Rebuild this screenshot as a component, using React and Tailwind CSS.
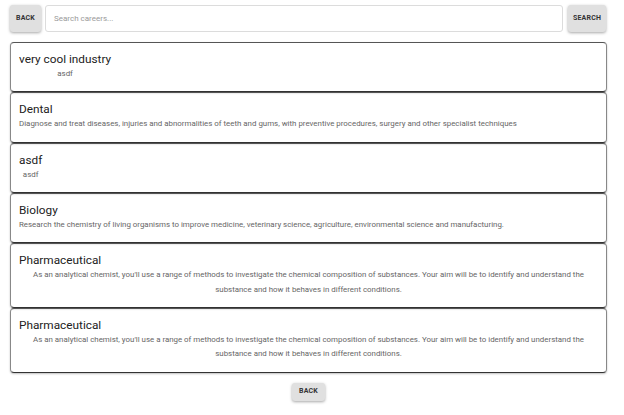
import React from "react";

const items = [
  { t: "very cool industry", d: "asdf" },
  { t: "Dental", d: "Diagnose and treat diseases, injuries and abnormalities of teeth and gums, with preventive procedures, surgery and other specialist techniques" },
  { t: "asdf", d: "asdf" },
  { t: "Biology", d: "Research the chemistry of living organisms to improve medicine, veterinary science, agriculture, environmental science and manufacturing." },
  { t: "Pharmaceutical", d: "As an analytical chemist, you'll use a range of methods to investigate the chemical composition of substances. Your aim will be to identify and understand the substance and how it behaves in different conditions." },
  { t: "Pharmaceutical", d: "As an analytical chemist, you'll use a range of methods to investigate the chemical composition of substances. Your aim will be to identify and understand the substance and how it behaves in different conditions." },
];

function Btn({ children, cls }) {
  return (
    <button className={"bg-[#e0e0e0] rounded-[3px] shadow-[0_1px_3px_rgba(0,0,0,0.35)] text-[7px] font-bold text-[#333] tracking-[0.2px] flex items-center justify-center " + cls}>
      {children}
    </button>
  );
}

export default function App() {
  return (
    <div className="w-[624px] h-[415px] bg-white font-['Roboto',sans-serif] pl-[10px] pt-[5px]">
      <div className="w-[596px] flex items-center gap-[4px]">
        <Btn cls="w-[31px] h-[27px]">BACK</Btn>
        <div className="flex-1 h-[27px] border border-[#dcdcdc] rounded-[3px] flex items-center px-[8px] text-[8px] text-[#9a9a9a]">
          Search careers...
        </div>
        <Btn cls="w-[38px] h-[27px] ml-[1px]">SEARCH</Btn>
      </div>
      <div className="w-[597px] mt-[10px] flex flex-col">
        {items.map((it, i) => (
          <div key={i} className="border border-[#888] border-t-[#555] border-b-[#333] rounded-[4px] px-[8px] pt-[9px] pb-[9.75px] shadow-[0_1px_2px_rgba(0,0,0,0.25)]">
            <div className="w-fit max-w-full">
              <div className="text-[11.8px] leading-[15px] text-[#222]">{it.t}</div>
              <div className="text-center text-[7.9px] leading-[14.5px] text-[#666]">{it.d}</div>
            </div>
          </div>
        ))}
      </div>
      <div className="w-[597px] flex justify-center mt-[10px]">
        <Btn cls="w-[33px] h-[18px]">BACK</Btn>
      </div>
    </div>
  );
}
